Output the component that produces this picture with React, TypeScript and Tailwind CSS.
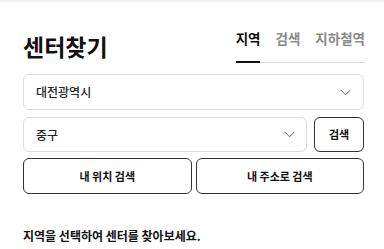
import React from "react";

const Chevron = () => (
  <svg width="11" height="7" viewBox="0 0 11 7" fill="none">
    <polyline points="0.5,0.8 5.5,5.8 10.5,0.8" stroke="#666" strokeWidth="1" />
  </svg>
);

export default function App() {
  const font = { fontFamily: '"Noto Sans CJK KR", "Noto Sans", sans-serif' };
  return (
    <div className="w-[384px] h-[249px] bg-white overflow-hidden" style={font}>
      <div className="h-[2px] bg-[#f2f2f2]" />
      <div className="pl-[23px] pr-[20px]">
        <div className="flex items-end justify-between pt-[27px]">
          <h1 className="text-[23px] leading-[28px] font-bold text-[#111] mb-[3px]">센터찾기</h1>
          <div className="flex gap-[15px] border-b border-[#d9d9d9] mr-[-1px]">
            <div className="pb-[14px] text-[13.5px] leading-[18px] font-bold text-[#111] border-b-2 border-[#111] -mb-px">지역</div>
            <div className="pb-[14px] text-[13.5px] leading-[18px] font-bold text-[#8a8a8a] border-b-2 border-transparent -mb-px">검색</div>
            <div className="pb-[14px] text-[13.5px] leading-[18px] font-bold text-[#8a8a8a] border-b-2 border-transparent -mb-px">지하철역</div>
          </div>
        </div>
        <div className="mt-[11px] h-[36px] border border-[#dddddd] rounded-[6px] flex items-center justify-between pl-[12px] pr-[12px]">
          <span className="text-[12px] font-medium text-[#222]">대전광역시</span>
          <Chevron />
        </div>
        <div className="mt-[7px] flex gap-[7px]">
          <div className="flex-1 h-[35px] border border-[#dddddd] rounded-[6px] flex items-center justify-between pl-[12px] pr-[11px]">
            <span className="text-[12px] font-medium text-[#222]">중구</span>
            <Chevron />
          </div>
          <button className="w-[50px] h-[35px] border border-[#333] rounded-[6px] text-[11px] font-bold text-[#111]">검색</button>
        </div>
        <div className="mt-[6px] grid grid-cols-2 gap-[4px]">
          <button className="h-[36px] border border-[#333] rounded-[6px] text-[11px] font-bold text-[#111]">내 위치 검색</button>
          <button className="h-[36px] border border-[#333] rounded-[6px] text-[11px] font-bold text-[#111]">내 주소로 검색</button>
        </div>
        <p className="mt-[33px] text-[12px] leading-[18px] font-bold text-[#111]">지역을 선택하여 센터를 찾아보세요.</p>
      </div>
    </div>
  );
}
